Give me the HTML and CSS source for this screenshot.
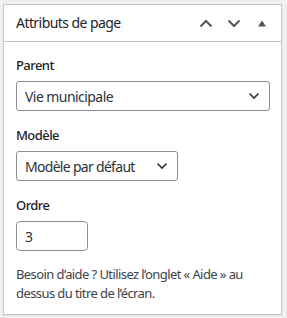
FILE: index.html
```html
<!DOCTYPE html>
<html lang="fr">
<head>
  <meta charset="UTF-8">
  <title>Attributs de page</title>
  <link rel="stylesheet" href="styles.css">
</head>
<body>

  <!-- Page attributes metabox -->
  <div class="postbox">
    <div class="postbox-header">
      <h2 class="hndle">Attributs de page</h2>
      <div class="handle-actions">
        <button class="handle-btn" aria-label="Monter">
          <svg width="14" height="9" viewBox="0 0 14 9"><path d="M1.5 7.5 L7 2 L12.5 7.5" fill="none" stroke="#50575e" stroke-width="2"/></svg>
        </button>
        <button class="handle-btn" aria-label="Descendre">
          <svg width="14" height="9" viewBox="0 0 14 9"><path d="M1.5 1.5 L7 7 L12.5 1.5" fill="none" stroke="#50575e" stroke-width="2"/></svg>
        </button>
        <button class="handle-btn" aria-label="Replier">
          <svg width="10" height="7" viewBox="0 0 10 7"><path d="M5 0.5 L9 6.5 L1 6.5 Z" fill="#50575e"/></svg>
        </button>
      </div>
    </div>

    <div class="inside">
      <p class="attr-label first">Parent</p>
      <div class="select wide">
        <span>Vie municipale</span>
        <svg width="12" height="8" viewBox="0 0 12 8"><path d="M1.5 1.5 L6 6 L10.5 1.5" fill="none" stroke="#2c3338" stroke-width="1.6"/></svg>
      </div>

      <p class="attr-label">Modèle</p>
      <div class="select narrow">
        <span>Modèle par défaut</span>
        <svg width="12" height="8" viewBox="0 0 12 8"><path d="M1.5 1.5 L6 6 L10.5 1.5" fill="none" stroke="#2c3338" stroke-width="1.6"/></svg>
      </div>

      <p class="attr-label">Ordre</p>
      <input class="order" type="text" value="3">

      <p class="help">Besoin d’aide ? Utilisez l’onglet « Aide » au dessus du titre de l’écran.</p>
    </div>
  </div>

</body>
</html>
```

FILE: styles.css
```css
/* General page style */
body {
  margin: 0;
  padding: 4px 5px 6px 3px;
  background: #f0f0f1;
  font-family: 'Noto Sans', 'Open Sans', sans-serif;
  letter-spacing: -0.035em;
  color: #1d2327;
}

/* Metabox */
.postbox {
  background: #fff;
  border: 1px solid #c3c4c7;
  box-shadow: 0 1px 1px rgba(0, 0, 0, 0.04);
}

.postbox-header {
  display: flex;
  align-items: center;
  justify-content: space-between;
  height: 36px;
  border-bottom: 1px solid #c3c4c7;
}

.hndle {
  margin: 0;
  padding: 0 12px;
  font-size: 14px;
  font-weight: 400;
  line-height: 1.4;
}

.handle-actions {
  display: flex;
  align-items: center;
  padding-right: 5px;
}

.handle-btn {
  width: 28px;
  height: 36px;
  padding: 0;
  border: none;
  background: none;
  display: flex;
  align-items: center;
  justify-content: center;
}

/* Content */
.inside {
  padding: 0 12px 11px;
}

.attr-label {
  margin: 15px 0 7px;
  font-size: 13px;
  font-weight: 500;
  line-height: 18px;
}

.attr-label.first {
  margin-top: 14px;
}

.select {
  display: flex;
  align-items: center;
  justify-content: space-between;
  box-sizing: border-box;
  height: 30px;
  padding: 0 9px 0 8px;
  border: 1px solid #8c8f94;
  border-radius: 3px;
  font-size: 14px;
  color: #2c3338;
}

.select.wide {
  width: 254px;
}

.select.narrow {
  width: 162px;
  letter-spacing: -0.05em;
}

.order {
  box-sizing: border-box;
  width: 72px;
  height: 30px;
  margin: 0;
  padding: 0 8px;
  border: 1px solid #8c8f94;
  border-radius: 4px;
  font-family: inherit;
  font-size: 14px;
  color: #2c3338;
}

.help {
  margin: 14px 0 0;
  font-size: 13px;
  line-height: 19px;
  letter-spacing: -0.045em;
  color: #3c434a;
}
```
